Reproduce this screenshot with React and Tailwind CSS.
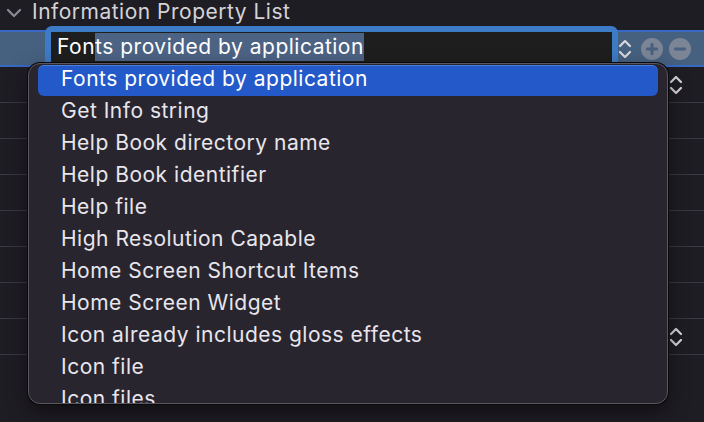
import React from 'react';

const items = [
  'Fonts provided by application',
  'Get Info string',
  'Help Book directory name',
  'Help Book identifier',
  'Help file',
  'High Resolution Capable',
  'Home Screen Shortcut Items',
  'Home Screen Widget',
  'Icon already includes gloss effects',
  'Icon file',
  'Icon files',
];

const Stepper = ({ className = '' }) => (
  <svg width="14" height="22" viewBox="0 0 14 22" className={className} fill="none">
    <path d="M2 8 L7 3 L12 8" stroke="#d8d6dc" strokeWidth="2.2" strokeLinecap="round" strokeLinejoin="round" />
    <path d="M2 14 L7 19 L12 14" stroke="#d8d6dc" strokeWidth="2.2" strokeLinecap="round" strokeLinejoin="round" />
  </svg>
);

const RoundButton = ({ plus }) => (
  <svg width="22" height="22" viewBox="0 0 22 22">
    <circle cx="11" cy="11" r="11" fill="#7b8596" />
    <rect x="5" y="9.5" width="12" height="3" rx="1" fill="#4a607f" />
    {plus && <rect x="9.5" y="5" width="3" height="12" rx="1" fill="#4a607f" />}
  </svg>
);

const Row = ({ stepper }) => (
  <div className="h-[36px] flex items-center justify-end pr-[21px] border-b border-[#3a3840]">
    {stepper && <Stepper />}
  </div>
);

export default function App() {
  return (
    <div
      className="relative w-[704px] h-[422px] overflow-hidden bg-[#1f1d24] text-[21px]"
      style={{ fontFamily: 'Inter, "Noto Sans", sans-serif' }}
    >
      {/* header */}
      <div className="h-[30px] flex items-center pl-[6px] pb-[6px]">
        <svg width="16" height="10" viewBox="0 0 16 10" className="mr-[10px] mt-[2px]">
          <path d="M2 2 L8 8 L14 2" stroke="#8c8a92" strokeWidth="2.2" fill="none" strokeLinecap="round" strokeLinejoin="round" />
        </svg>
        <span className="text-[#d4d3d8] tracking-[0.5px]">Information Property List</span>
      </div>

      {/* selected row */}
      <div className="relative h-[37px] bg-[#46607f] border-y-2 border-[#3668c4] flex items-center">
        <div className="absolute left-[45px] top-[-6px] w-[573px] h-[48px] rounded-[7px] bg-[#3d7bc6] p-[6px] pb-0">
          <div className="h-full bg-[#1e1e1e] flex items-start pt-[1px] pl-[6px] text-white tracking-[0.5px]">
            <span className="leading-[28px]">Fon</span>
            <span className="bg-[#4d6384] leading-[28px]">ts provided by application</span>
          </div>
        </div>
        <div className="ml-auto flex items-center gap-[6px] pr-[13px]">
          <Stepper className="mr-[3px]" />
          <RoundButton plus />
          <RoundButton />
        </div>
      </div>

      {/* background rows */}
      <div>
        <Row stepper />
        <Row />
        <Row />
        <Row />
        <Row />
        <Row />
        <Row />
        <Row stepper />
      </div>

      {/* popup menu */}
      <div className="absolute left-[28px] top-[63px] w-[640px] h-[341px] rounded-[12px] bg-[#29252f] border border-[#5a5760] shadow-[0_0_0_1px_#0a0a0c,0_8px_20px_rgba(0,0,0,0.5)] overflow-hidden pt-[1px] px-[9px]">
        {items.map((item, i) => (
          <div
            key={item}
            className={`flex items-center pl-[23px] pb-[4px] tracking-[0.5px] ${
              i === 0
                ? 'h-[31px] mb-[1px] bg-[#2459c9] rounded-[6px] border-t border-[#4a7fe0] text-white'
                : 'h-[32px] text-[#e8e6ec]'
            }`}
          >
            {item}
          </div>
        ))}
      </div>
    </div>
  );
}
